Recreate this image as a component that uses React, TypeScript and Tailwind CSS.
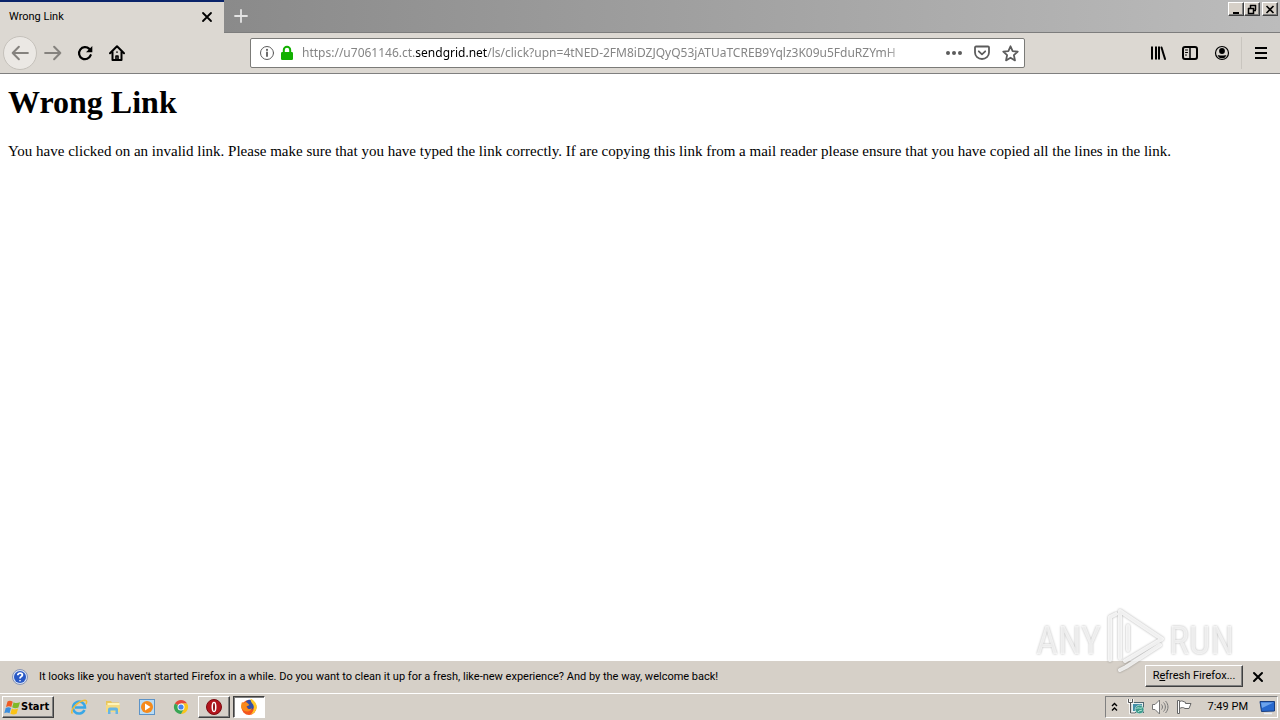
import React from "react";

const stroke = { fill: "none", stroke: "currentColor", strokeLinecap: "round", strokeLinejoin: "round" } as const;

function Glyph({ size = 16, width = 2, children }: { size?: number; width?: number; children: React.ReactNode }) {
  return (
    <svg width={size} height={size} viewBox="0 0 16 16" aria-hidden="true" strokeWidth={width} {...stroke}>
      {children}
    </svg>
  );
}

const raised = "border border-t-white border-l-white border-r-[#404040] border-b-[#404040] shadow-[inset_-1px_-1px_0_#808080]";
const sunken = "border border-t-[#404040] border-l-[#404040] border-r-white border-b-white shadow-[inset_1px_1px_0_#808080]";

function WindowButton({ label, children }: { label: string; children: React.ReactNode }) {
  return (
    <button aria-label={label} className={`flex h-[14px] w-4 items-center justify-center bg-[#d6d0c8] ${raised}`}>
      <svg width="12" height="11" viewBox="0 0 12 11" fill="none" stroke="#000" aria-hidden="true">{children}</svg>
    </button>
  );
}

function ToolButton({ label, children }: { label: string; children: React.ReactNode }) {
  return (
    <button aria-label={label} className="flex size-8 shrink-0 items-center justify-center">
      {children}
    </button>
  );
}

function TabStrip() {
  return (
    <header className="flex h-[33px] border-b border-[#7d7d7d] bg-linear-to-r from-[#808080] to-[#bcbcbc]">
      <div className="-mb-px flex w-[224px] items-center justify-between border-t-2 border-[#0a246a] bg-[#dcd8d2] pr-2 pb-0.5 pl-[9px]">
        <span className="text-[11px] leading-4">Wrong Link</span>
        <button aria-label="Close tab" className="flex size-[18px] items-center justify-center">
          <Glyph size={16} width={1.800}><path d="M4 4l8 8M12 4l-8 8" /></Glyph>
        </button>
      </div>
      <button aria-label="New tab" className="flex w-[34px] items-center justify-center text-[#e4e4e4]">
        <Glyph size={16} width={1.8}><path d="M8 2v12M2 8h12" /></Glyph>
      </button>
      <div className="mt-0.5 mr-0.5 ml-auto flex">
        <WindowButton label="Minimize"><path d="M3 9h6" strokeWidth="2" /></WindowButton>
        <WindowButton label="Restore"><path d="M4 1.5h6M4.5 1v3M9.5 1v5M8 6.5h2M2 4.5h6M2.5 4v5.500h5V4" strokeWidth="1.500" /></WindowButton>
        <div className="w-0.5" />
        <WindowButton label="Close"><path d="M2.500 2l7 7M9.500 2l-7 7" strokeWidth="1.600" /></WindowButton>
      </div>
    </header>
  );
}

function AddressBar() {
  return (
    <div className="flex h-[30px] min-w-0 flex-1 items-center rounded-[2px] border border-[#7b7b78] bg-white pl-2 text-[#5c5c5c]">
      <button aria-label="Site information" className="shrink-0">
        <Glyph size={16} width={1}>
          <circle cx="8" cy="8" r="6.500" />
          <path d="M8 7.500v3.500" strokeWidth="1.800" />
          <path d="M8 4.800v.1" strokeWidth="2" />
        </Glyph>
      </button>
      <svg width="16" height="16" viewBox="0 0 16 16" className="ml-1 shrink-0" aria-label="Secure connection">
        <path d="M4.800 8V5a3.200 3.200 0 0 1 6.400 0v3" fill="none" stroke="#12b000" strokeWidth="2" />
        <rect x="2" y="7" width="12" height="8" rx="1.200" fill="#12b000" />
      </svg>
      <div className="ml-[7px] min-w-0 flex-1 overflow-hidden mask-r-from-[96%] font-['Noto_Sans',sans-serif] text-[12px] leading-5 whitespace-nowrap text-[#858585]">
        https://u7061146.ct.<span className="text-black">sendgrid.net</span>/ls/click?upn=4tNED-2FM8iDZJQyQ53jATUaTCREB9Yqlz3K09u5FduRZYmH
      </div>
      <div className="ml-[30px] flex shrink-0">
        <button aria-label="Page actions" className="flex w-7 items-center justify-center">
          <svg width="18" height="16" viewBox="0 0 18 16" fill="currentColor" aria-hidden="true">
            <circle cx="3" cy="8" r="2" /><circle cx="9" cy="8" r="2" /><circle cx="15" cy="8" r="2" />
          </svg>
        </button>
        <button aria-label="Save to Pocket" className="flex w-7 items-center justify-center">
          <Glyph size={16} width={1.8}>
            <path d="M2 1.500h12a1 1 0 0 1 1 1v5a7 6.500 0 0 1-14 0v-5a1 1 0 0 1 1-1zM4.800 6.300L8 9.300l3.200-3" />
          </Glyph>
        </button>
        <button aria-label="Bookmark this page" className="flex w-7 items-center justify-center">
          <Glyph size={17} width={1.700}>
            <path d="M8 1.200l2 4.500 4.800.5-3.600 3.300 1 5L8 12l-4.200 2.500 1-5L1.200 6.200l4.800-.5z" />
          </Glyph>
        </button>
      </div>
    </div>
  );
}

function Toolbar() {
  return (
    <nav aria-label="Navigation" className="flex h-[41px] items-center border-b border-[#7f7f7f] bg-[#dcd8d2] pr-[3px] pl-[3px]">
      <button aria-label="Back" className="flex size-[34px] shrink-0 items-center justify-center rounded-full border border-[#c5c1bb] bg-[#ebe8e4] text-[#85827e]">
        <Glyph size={18} width={1.800}><path d="M15 8H1.500M7 2.500L1.500 8 7 13.500" /></Glyph>
      </button>
      <button aria-label="Forward" className="flex size-8 shrink-0 items-center justify-center text-[#85827e]">
        <Glyph size={18} width={1.800}><path d="M1 8h13.500M9 2.500L14.500 8 9 13.500" /></Glyph>
      </button>
      <ToolButton label="Reload">
        <svg width="16" height="16" viewBox="0 0 16 16" aria-hidden="true">
          <path d="M13.700 10.200A6 6 0 1 1 12.300 3.900" fill="none" stroke="#000" strokeWidth="2.200" strokeLinecap="round" />
          <path d="M15.300 1v6.300H9z" fill="#000" />
        </svg>
      </ToolButton>
      <ToolButton label="Home">
        <svg width="16" height="16" viewBox="0 0 16 16" fill="none" stroke="#000" strokeWidth="2" strokeLinejoin="round" strokeLinecap="round" aria-hidden="true">
          <path d="M1 8.200l7-7 7 7M3.500 7v8h9V7" />
          <path d="M7 15v-4h2v4M8 7v.3" strokeWidth="1.600" />
        </svg>
      </ToolButton>
      <div className="ml-[117px] flex min-w-0 flex-1">
        <AddressBar />
      </div>
      <div className="ml-[117px] flex shrink-0 items-center">
        <ToolButton label="Library">
          <Glyph size={16} width={2}><path d="M2 1.500v13M6 1.500v13M9 1.500v13" strokeLinecap="butt" /><path d="M11.500 2.500l3.500 11.500" /></Glyph>
        </ToolButton>
        <ToolButton label="Sidebars">
          <Glyph size={16} width={2}><rect x="1" y="2" width="14" height="12" rx="2" /><path d="M8 2v12" strokeWidth="1.500" /><path d="M3.500 5h2M3.500 7.500h2M3.500 10h1" strokeWidth="1" /></Glyph>
        </ToolButton>
        <ToolButton label="Account">
          <svg width="16" height="16" viewBox="0 0 16 16" aria-hidden="true">
            <circle cx="8" cy="8" r="6.500" fill="none" stroke="#000" strokeWidth="1.200" />
            <circle cx="8" cy="6" r="2.900" />
            <path d="M3.500 10.500c1.500-.8 2.500 0 4.500 0s3-.8 4.500 0A5 5 0 0 1 8 13.200a5 5 0 0 1-4.500-2.700z" />
          </svg>
        </ToolButton>
        <div className="ml-[3px] h-8 w-px bg-[#c9c5bf]" />
        <div className="w-[3px]" />
        <ToolButton label="Open menu">
          <svg width="16" height="16" viewBox="0 0 16 16" aria-hidden="true"><path d="M2 3h12M2 8h12M2 13h12" stroke="#000" strokeWidth="2" /></svg>
        </ToolButton>
      </div>
    </nav>
  );
}

function Watermark() {
  return (
    <div
      role="img"
      aria-label="ANY RUN"
      className="pointer-events-none absolute right-[46px] bottom-[46px] flex items-center gap-1 font-['Liberation_Sans_Narrow','Roboto_Condensed','Liberation_Sans',sans-serif] text-[38px] leading-[38px] text-white/70 drop-shadow-[0_0_1px_rgba(0,0,0,0.4)]"
    >
      <span>ANY</span>
      <svg width="60" height="66" viewBox="0 0 60 66" fill="none" stroke="#fff" strokeOpacity="0.8" strokeWidth="4" strokeLinejoin="round" strokeLinecap="round" aria-hidden="true">
        <path d="M5 52V9l6-3M15 50V3l42 28-37 22M15 62l6-3 34-22M23 18v24" />
      </svg>
      <span>RUN</span>
    </div>
  );
}

function RefreshNotice() {
  return (
    <aside className="flex h-8 items-center bg-[#d6d0c8] pr-[13px] pl-3 text-[11px] leading-4">
      <svg width="16" height="16" viewBox="0 0 16 16" className="shrink-0" aria-hidden="true">
        <circle cx="8" cy="8" r="7.500" fill="#d7e1f4" stroke="#8794b5" />
        <circle cx="8" cy="8" r="6" fill="#2858c5" />
        <path d="M5.800 6.300c0-3 4.600-2.700 4.600-.2C10.400 7.700 8 7.500 8 9.500M8 11.300v1" fill="none" stroke="#fff" strokeWidth="1.800" />
      </svg>
      <p className="ml-[11px]">
        It looks like you haven't started Firefox in a while. Do you want to clean it up for a fresh, like-new experience? And by the way, welcome back!
      </p>
      <button className={`mr-1.5 mb-0.5 ml-auto h-[22px] w-[98px] shrink-0 bg-[#d6d0c8] ${raised}`}>
        R<u>e</u>fresh Firefox...
      </button>
      <button aria-label="Close notice" className="flex size-[18px] items-center justify-center">
        <Glyph size={16} width={2}><path d="M4 4l8 8M12 4l-8 8" /></Glyph>
      </button>
    </aside>
  );
}

function WindowsFlag() {
  return (
    <svg width="17" height="17" viewBox="0 0 17 17" aria-hidden="true">
      <path d="M3.500 2.500C5 1.500 7 1.600 8.700 2.700L7.300 8C5.600 7 3.800 7 2 8z" fill="#ef5b24" />
      <path d="M9.600 3.200c2 1.200 4 1 6.400 0l-1.600 5.200c-2 1-4 1-6.200-.1z" fill="#7fb928" />
      <path d="M1.700 9c1.800-1 3.600-1 5.300 0l-1.500 5.200C3.800 13.200 2 13.200.3 14.200z" fill="#3b8ede" />
      <path d="M7.900 9.400c2 1.200 4.200 1.200 6.200.1l-1.500 5.200c-2 1-4.200 1-6.200 0z" fill="#fbc316" />
    </svg>
  );
}

function ExplorerIcon() {
  return (
    <svg width="18" height="18" viewBox="0 0 18 18" fill="none" aria-hidden="true">
      <path d="M14.500 12A6 6 0 1 1 15 9.500H5" stroke="#39a7e6" strokeWidth="2.500" />
      <path d="M2.500 15.500C-1 13 8 2.500 15 2.200c2 .1 2 2 1 4" stroke="#efbb36" strokeWidth="1.500" />
    </svg>
  );
}

function FolderIcon() {
  return (
    <svg width="18" height="18" viewBox="0 0 18 18" aria-hidden="true">
      <path d="M2 3h5l1 1.500h7V14H2z" fill="#e9c65c" />
      <path d="M3.500 5h12v8h-12z" fill="#fff4b8" />
      <path d="M2 7h14v7H2z" fill="#f5db82" />
      <path d="M4 16v-4.500a2 2 0 0 1 2-2h6a2 2 0 0 1 2 2V16h-2.500v-3.500h-5V16z" fill="#66b5e4" />
    </svg>
  );
}

function MediaIcon() {
  return (
    <svg width="18" height="18" viewBox="0 0 18 18" aria-hidden="true">
      <rect x="1.500" y="1.500" width="15" height="15" fill="#b9dcf5" stroke="#5d93c7" />
      <circle cx="9" cy="9" r="6" fill="#f58a1b" />
      <path d="M7 5.500v7L12.500 9z" fill="#fff" />
    </svg>
  );
}

function ChromeIcon() {
  return (
    <svg width="18" height="18" viewBox="0 0 18 18" aria-hidden="true">
      <path d="M9 9L2.900 5.500A7 7 0 0 1 15.100 5.500L9 5.500z" fill="#e5473a" />
      <path d="M9 9L15.100 5.500A7 7 0 0 1 9 16L12 10.800z" fill="#f9c51c" />
      <path d="M2.900 5.500A7 7 0 0 0 9 16l3-5.200L9 9z" fill="#38a554" />
      <path d="M9 5.500h6.100L12 10.800z" fill="#f9c51c" />
      <circle cx="9" cy="9" r="3.500" fill="#fff" />
      <circle cx="9" cy="9" r="2.600" fill="#4484ee" />
    </svg>
  );
}

function OperaIcon() {
  return (
    <svg width="18" height="18" viewBox="0 0 18 18" aria-hidden="true">
      <circle cx="9" cy="9" r="7.500" fill="#b3141c" stroke="#7c0b12" />
      <ellipse cx="9" cy="9" rx="2.500" ry="5.200" fill="#fff" />
      <ellipse cx="9" cy="9" rx="1" ry="4" fill="#8c1016" />
    </svg>
  );
}

function FirefoxIcon() {
  return (
    <svg width="18" height="18" viewBox="0 0 18 18" aria-hidden="true">
      <circle cx="9" cy="9.500" r="7.500" fill="#f4561c" />
      <path d="M6 3.500C7.500 1.500 10 1.200 12 2.200l3 5.300-2.500 4-4-.5L6 8z" fill="#3350a8" />
      <path d="M2 4c.5 0 1 .8 1.500 1.500C4.500 4 6 4 7 4.500L9.500 7 6.500 8.500c0 3 4 3.500 5.500 1-1 5-7.500 5-10.500 1C.5 8 1.500 5.500 2 4z" fill="#f98a1c" />
      <path d="M10.500.8c4 1.500 7 5.700 6 9.700-.8 3-3 5-5.500 5.700 2.500-3 3.500-5.700 2.500-8.700-.5-2-3-3-3-6.700z" fill="#ffc928" />
    </svg>
  );
}

function QuickButton({ label, children }: { label: string; children: React.ReactNode }) {
  return <button aria-label={label} className="flex w-[34px] items-center justify-center">{children}</button>;
}

function Tray() {
  return (
    <div className="ml-auto flex h-[22px] items-center border border-t-[#808080] border-r-white border-b-white border-l-[#808080] pr-px pl-[3px]">
      <button aria-label="Show hidden icons" className="flex w-3 justify-center">
        <svg width="7" height="10" viewBox="0 0 7 10" fill="none" stroke="#000" strokeWidth="1.400" aria-hidden="true"><path d="M1 4l2.500-2.500L6 4M1 8.500L3.500 6 6 8.500" /></svg>
      </button>
      <button aria-label="Network" className="ml-1.5 flex w-[18px] justify-center">
        <svg width="18" height="18" viewBox="0 0 18 18" aria-hidden="true">
          <rect x="4.500" y="4.500" width="12" height="10" fill="#e8f0f0" stroke="#506770" />
          <rect x="6" y="6" width="9" height="7" fill="#4390a8" />
          <circle cx="12.500" cy="11.500" r="4.300" fill="#3b9a8b" stroke="#e6f2ef" strokeWidth="0.600" />
          <path d="M9.500 10.500c2-2 4 1 6-1M11 14c1-2 3-1 4-2" fill="none" stroke="#b4e7d6" />
          <path d="M1.500 1v3.500h4V1M3.500 4.500V15H8" fill="none" stroke="#fff" strokeWidth="2.500" />
          <path d="M1.500 1v3.500h4V1M3.500 4.500V15H8" fill="none" stroke="#555" />
        </svg>
      </button>
      <button aria-label="Volume" className="ml-1.5 flex w-[18px] justify-center">
        <svg width="18" height="18" viewBox="0 0 18 18" fill="none" stroke="#777" aria-hidden="true">
          <path d="M1.500 6.500h2.500L8.500 2v14L4 11.500H1.500z" fill="#fff" />
          <path d="M10.500 6.500c1.300 1.500 1.300 3.500 0 5M12.500 4.500c2.500 2.500 2.500 6.500 0 9M14.500 3c3.300 3.500 3.300 8.500 0 12" />
        </svg>
      </button>
      <button aria-label="Action center" className="ml-1.5 flex w-[18px] justify-center">
        <svg width="18" height="18" viewBox="0 0 18 18" fill="#fff" stroke="#666" aria-hidden="true">
          <path d="M4.500 3.500c3-1.500 4 .5 6 .8v1.200h5.500l-2 5h-4c-2-1.500-3.500-1-5.500 0z" />
          <path d="M2.500 2.500h2v13h-2z" />
        </svg>
      </button>
      <time className="ml-[15px] text-[11px] leading-4">7:49 PM</time>
      <button aria-label="Show desktop" className="ml-2.5 flex">
        <svg width="18" height="18" viewBox="0 0 18 18" aria-hidden="true">
          <path d="M2 3.500h14.500v9.500l-13 .5z" fill="#2869ce" stroke="#183d7e" />
          <path d="M3 4.500h12.500L4 10z" fill="#6da4ec" />
          <path d="M6 15.500h8" stroke="#e8eef7" strokeWidth="1.500" />
        </svg>
      </button>
    </div>
  );
}

function Taskbar() {
  return (
    <footer className="flex h-[27px] items-center border-t border-white bg-[#d6d0c8] pr-0.5 pl-0.5">
      <button className={`flex h-[22px] w-[52px] items-center bg-[#d6d0c8] pl-px font-['DejaVu_Sans_Condensed',sans-serif] text-[11px] leading-4 font-bold ${raised}`}>
        <WindowsFlag />
        Start
      </button>
      <div className="ml-2 flex">
        <QuickButton label="Internet Explorer"><ExplorerIcon /></QuickButton>
        <QuickButton label="File Explorer"><FolderIcon /></QuickButton>
        <QuickButton label="Media Player"><MediaIcon /></QuickButton>
        <QuickButton label="Chrome"><ChromeIcon /></QuickButton>
      </div>
      <div className="flex gap-[3px]">
        <button aria-label="Opera" className={`flex h-[22px] w-8 items-center justify-center bg-[#d6d0c8] ${raised}`}><OperaIcon /></button>
        <button aria-label="Firefox" className={`flex h-[22px] w-8 items-center justify-center bg-white ${sunken}`}><FirefoxIcon /></button>
      </div>
      <Tray />
    </footer>
  );
}

export default function App() {
  return (
    <div className="relative flex min-h-screen flex-col bg-white font-['Roboto','Noto_Sans',sans-serif] text-black">
      <TabStrip />
      <Toolbar />
      <main className="flex-1 px-2 pt-2.5 font-['Liberation_Serif',serif]">
        <h1 className="text-[32px] leading-9 font-bold">Wrong Link</h1>
        <p className="mt-[21px] text-[15px] leading-5">
          You have clicked on an invalid link. Please make sure that you have typed the link correctly. If are copying this link from a mail reader please ensure that you have copied all the lines in the link.
        </p>
      </main>
      <RefreshNotice />
      <Taskbar />
      <Watermark />
    </div>
  );
}
